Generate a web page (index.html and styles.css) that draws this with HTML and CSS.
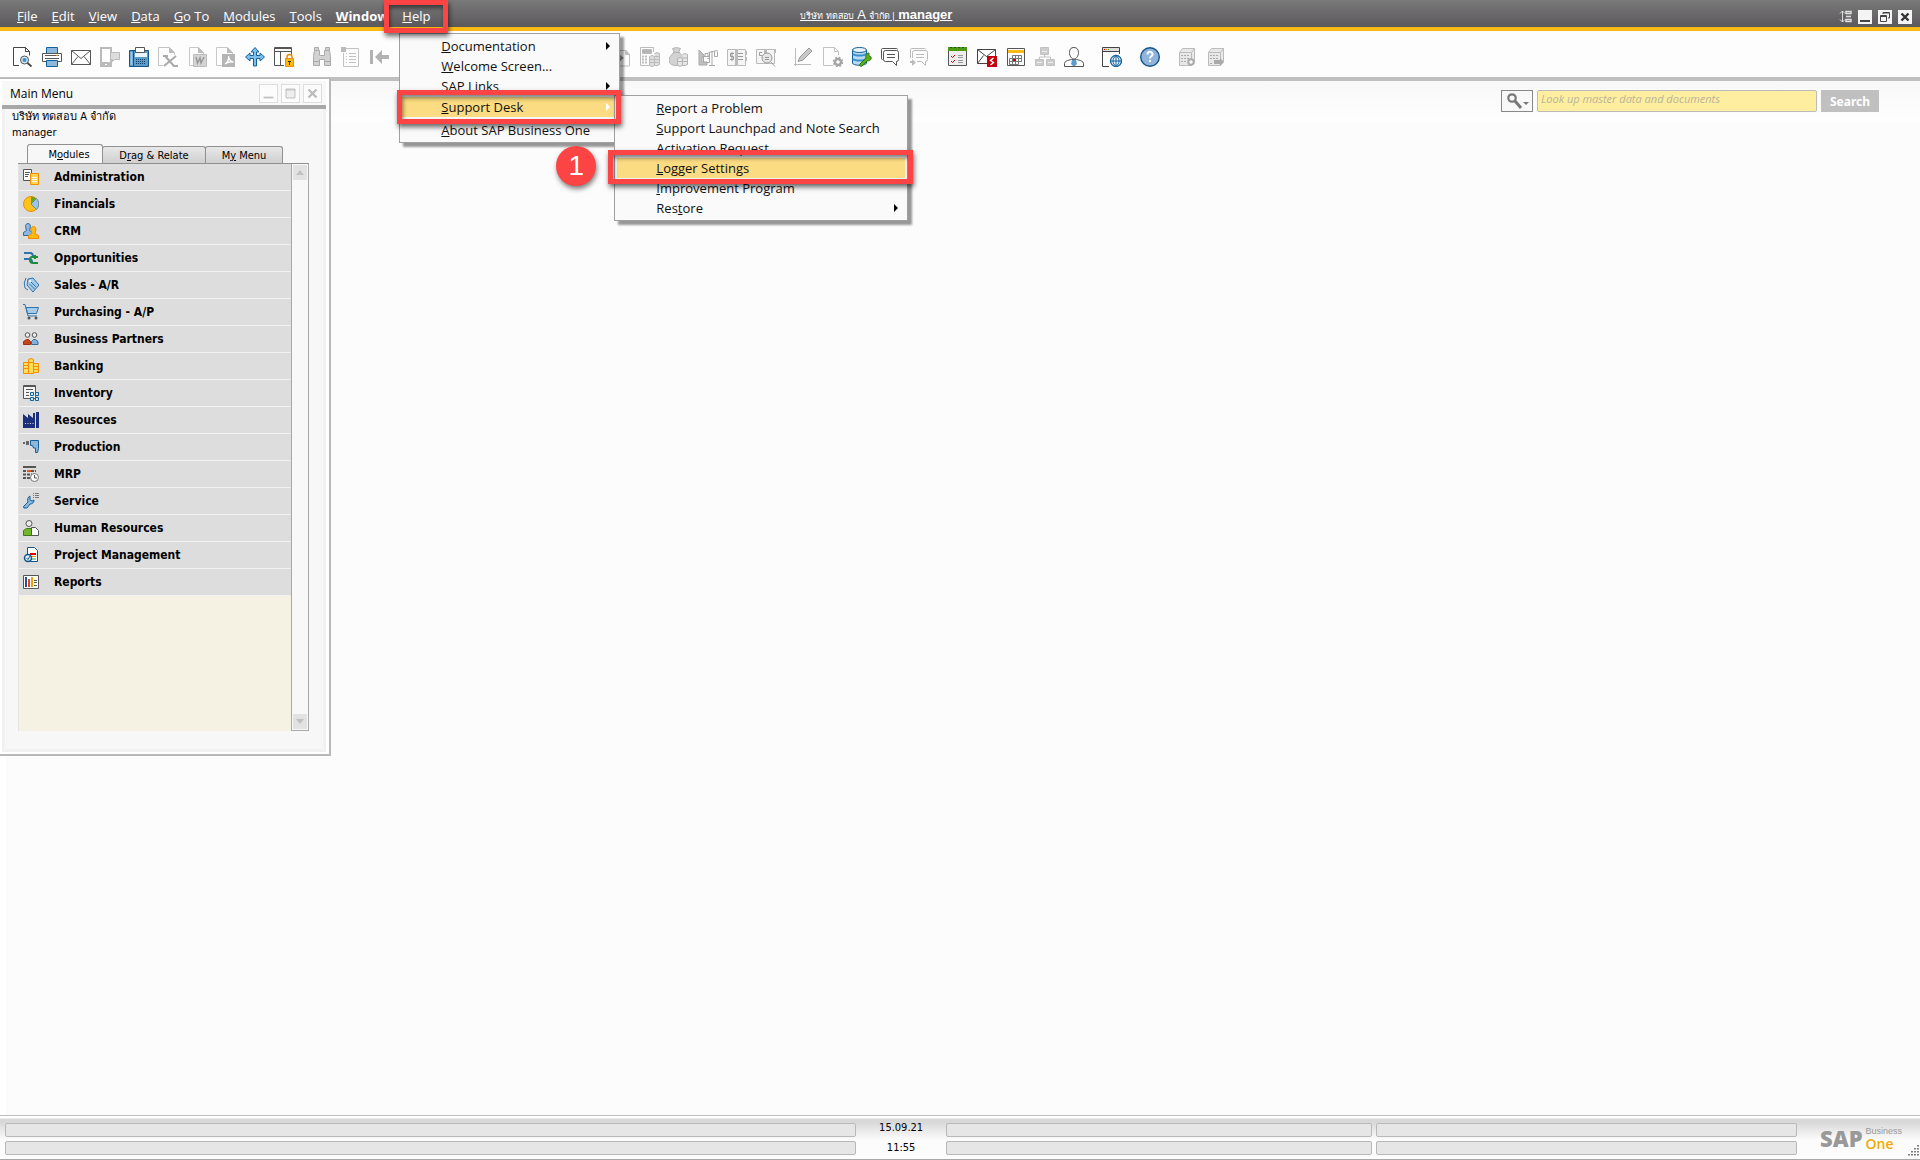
FILE: index.html
```html
<!DOCTYPE html>
<html lang="en">
<head>
    <meta charset="UTF-8">
    <meta name="viewport" content="width=device-width, initial-scale=1.0">
    <title>SAP Business One</title>
    <link rel="stylesheet" href="styles.css">
</head>
<body>
    <header class="menubar">
        <nav aria-label="Main">
            <ul class="menus">
                <li><button class="menu-btn"><u>F</u>ile</button></li>
                <li><button class="menu-btn"><u>E</u>dit</button></li>
                <li><button class="menu-btn"><u>V</u>iew</button></li>
                <li><button class="menu-btn"><u>D</u>ata</button></li>
                <li><button class="menu-btn"><u>G</u>o To</button></li>
                <li><button class="menu-btn"><u>M</u>odules</button></li>
                <li><button class="menu-btn"><u>T</u>ools</button></li>
                <li><button class="menu-btn current"><u>W</u>indow</button></li>
                <li class="open">
                    <button class="menu-btn"><u>H</u>elp</button>
                    <span class="mark mark-help"></span>
                    <ul class="dropdown">
                        <li><button class="item"><u>D</u>ocumentation<i class="arrow"></i></button></li>
                        <li><button class="item"><u>W</u>elcome Screen...</button></li>
                        <li><button class="item"><u>S</u>AP Links<i class="arrow"></i></button></li>
                        <li class="desk">
                            <button class="item active"><u>S</u>upport Desk<i class="arrow"></i></button>
                            <span class="mark mark-desk"></span>
                            <ul class="dropdown sub">
                                <li><button class="item"><u>R</u>eport a Problem</button></li>
                                <li><button class="item"><u>S</u>upport Launchpad and Note Search</button></li>
                                <li><button class="item"><u>A</u>ctivation Request</button></li>
                                <li class="logger">
                                    <button class="item active"><u>L</u>ogger Settings</button>
                                    <span class="mark mark-logger"></span>
                                    <span class="step">1</span>
                                </li>
                                <li><button class="item"><u>I</u>mprovement Program</button></li>
                                <li><button class="item">Res<u>t</u>ore<i class="arrow"></i></button></li>
                            </ul>
                        </li>
                        <li><button class="item"><u>A</u>bout SAP Business One</button></li>
                    </ul>
                </li>
            </ul>
        </nav>
        <a href="#" class="session"><small>บริษัท ทดสอบ</small> <span>A</span> <small>จำกัด |</small> <b>manager</b></a>
        <div class="win-controls">
            <svg width="13" height="13" viewBox="0 0 13 13" fill="none" stroke="#ddd"><path d="M3.500 1v11M1 3.500 3.500 1 6 3.500M1 9.500 3.500 12 6 9.500"/><path d="M7 1.500h5v2H7zM7 6.500h5M7 9.500h5v2H7z" stroke-width="1.500"/></svg>
            <button aria-label="Minimize"><svg width="14" height="14" viewBox="0 0 14 14"><path d="M2 10h10v2H2z" fill="#444"/></svg></button>
            <button aria-label="Restore"><svg width="14" height="14" viewBox="0 0 14 14" fill="none" stroke="#444"><path d="M5 4V2.500h6.500V8H10M2.500 5.500h6v6h-6zM2.500 6.500h6M5 3h6"/></svg></button>
            <button aria-label="Close"><svg width="14" height="14" viewBox="0 0 14 14"><path d="m3.500 3.500 7 7m0-7-7 7" stroke="#333" stroke-width="2.400"/></svg></button>
        </div>
    </header>

    <div class="toolbar" role="toolbar" aria-label="Toolbar">
        <div class="group">
            <button aria-label="Preview"><svg viewBox="0 0 20 20" fill="none"><path d="M6 18.500H.5V.5h12l4 4v4M12.500.5v4h4" stroke="#444"/><circle cx="11.500" cy="13" r="4" fill="#cfe6f7" stroke="#555"/><circle cx="11.500" cy="13" r="2" fill="#3f8fc8"/><path d="m14.500 16 4 3.500" stroke="#444" stroke-width="1.800"/></svg></button>
            <button aria-label="Print"><svg viewBox="0 0 20 20"><path d="M4.500.5h11v6h-11z" fill="#8db8dc" stroke="#14619a"/><path d="M.5 6.500h19v8H.5z" fill="#fff" stroke="#555"/><path d="M3 8.500h14M3 11.500h14" stroke="#555"/><path d="M14 8h2v1h-2z" fill="#e80"/><path d="M4.500 13.500h11v6h-11z" fill="#8db8dc" stroke="#14619a"/></svg></button>
            <button aria-label="Mail"><svg viewBox="0 0 20 20" fill="#fff" stroke="#555"><path d="M.5 3.500h19v14H.5z"/><path d="m.5 3.500 9.500 8 9.500-8M.5 17.500 7 9.500M19.500 17.500 13 9.500" fill="none"/></svg></button>
            <button aria-label="SMS"><svg viewBox="0 0 20 20"><path d="M1 1h10v18H1z" fill="#fff" stroke="#bbb" stroke-width="2"/><path d="M0 15h12v5H0z" fill="#bbb"/><path d="M5 17h2v1H5z" fill="#fff"/><path d="M10.500 5.500h9v7h-5l-2 2v-2h-2z" fill="#ddd" stroke="#bbb"/></svg></button>
            <button aria-label="Fax"><svg viewBox="0 0 20 20"><path d="M.5 3.500h19v16H.5z" fill="#5b9ccb" stroke="#14548a"/><path d="M6.500.5h9v5h-9z" fill="#fff" stroke="#555"/><path d="M1.500 5h2v13h-2z" fill="#9dc6e4"/><path d="M6 6h12v4H6z" fill="#e8f4fc"/><path d="M4.500 4v15" stroke="#14548a"/><path d="M7 12.500h10M7 14.500h10M7 16.500h10" stroke="#143e66" stroke-dasharray="1 1"/></svg></button>
            <button aria-label="Export to Excel"><svg viewBox="0 0 20 20"><path d="M5 18.500H.5V.5h11l5 5V8" fill="none" stroke="#c2c2c2"/><path d="M11 0v6h6z" fill="#bbb"/><path d="m7 9 9 10m2-10L6 19M5 9h5M15 19h5" fill="none" stroke="#aaa" stroke-width="2"/></svg></button>
            <button aria-label="Export to Word"><svg viewBox="0 0 20 20"><path d="M2.500 18.500V.5h9l5 5V8M2.500 18.500H6" fill="none" stroke="#c8c8c8"/><path d="M11 0v6h6z" fill="#bbb"/><path d="M6.500 7.500h13v12h-13z" fill="#d4d4d4" stroke="#bbb"/><path d="m9 10 1.500 6 2.500-5 1 5 3-6" fill="none" stroke="#999" stroke-width="1.500"/></svg></button>
            <button aria-label="Export to PDF"><svg viewBox="0 0 20 20"><path d="M6 18.500H.5V.5h11l5 5V8" fill="none" stroke="#c8c8c8"/><path d="M11 0v6h6z" fill="#bbb"/><path d="M6 7h13v13H6z" fill="#b5b5b5"/><path d="M9 17c3-2 4-5 3.500-8 .5 4 2 6 5 6-3-.5-6 0-8.500 2z" fill="none" stroke="#fff" stroke-width="1.300"/></svg></button>
            <button aria-label="Move"><svg viewBox="0 0 20 20"><path d="m10 .5 4 4.500h-2.500v3.500H15V6l4.500 4-4.500 4v-2.500h-3.500V19h-3v-7.500H5V14L.5 10 5 6v2.500h3.500V5H6z" fill="#7fc0ea" stroke="#14619a"/></svg></button>
            <button aria-label="Lock screen"><svg viewBox="0 0 20 20"><path d="M10 18.500H.5V.5h17V9M0 4.500h18M6.500 4.500v14" fill="none" stroke="#555"/><path d="M.5 1.500h17" stroke="#555"/><path d="M13 12v-2a2.500 2.500 0 0 1 5 0v2" fill="none" stroke="#e8900c" stroke-width="1.500"/><path d="M11.500 11.500h8v8h-8z" fill="#fdb913" stroke="#e8900c"/><path d="M14 14h3v1h-1v3h-1v-3h-1z" fill="#333"/></svg></button>
        </div>
        <div class="group">
            <button aria-label="Find"><svg viewBox="0 0 20 20" fill="#d2d2d2" stroke="#aaa"><path d="M2.500.5h4v3h1v5h5v-5h1v-3h4v3l1 6v9h-6v-6h-5v6h-6v-9l1-6zM1.500 14.500h6M12.500 14.500h6M2.500 3.500h4M13.500 3.500h4"/></svg></button>
            <button aria-label="Form settings"><svg viewBox="0 0 20 20" fill="none" stroke="#c2c2c2"><path d="M4 1.500h13.500v18H2.500V6M5 6.500h1M8 6.500h7M5 9.500h1M8 9.500h7M5 12.500h1M8 12.500h7M5 15.500h1M8 15.500h7"/><path d="M0 0h5v5H0z" fill="#bbb" stroke="none"/></svg></button>
            <button aria-label="First record"><svg viewBox="0 0 20 20" fill="#b2b2b2"><path d="M0 3h3v14H0zM5 10l7-7v5h7v4h-7v5z"/></svg></button>
            <button aria-label="Previous record"><svg viewBox="0 0 20 20" fill="#b2b2b2"><path d="m2 10 7-7v5h8v4H9v5z"/></svg></button>
            <button aria-label="Next record"><svg viewBox="0 0 20 20" fill="#b2b2b2"><path d="m18 10-7-7v5H3v4h8v5z"/></svg></button>
            <button aria-label="Last record"><svg viewBox="0 0 20 20" fill="#b2b2b2"><path d="M17 3h3v14h-3zM15 10 8 3v5H1v4h7v5z"/></svg></button>
        </div>
        <div class="group">
            <button aria-label="Filter"><svg viewBox="0 0 20 20" fill="#bbb"><path d="M1 2h18l-7 8v8l-4-3v-5z"/></svg></button>
            <button aria-label="Sort"><svg viewBox="0 0 20 20" fill="none" stroke="#bbb"><path d="M2 4.500h16M2 9.500h11M2 14.500h6"/></svg></button>
            <button aria-label="Refresh"><svg viewBox="0 0 20 20" fill="none" stroke="#bbb" stroke-width="2"><path d="M16 6a7 7 0 1 0 1 6M17 1v6h-6"/></svg></button>
            <button aria-label="Base document"><svg viewBox="0 0 20 20" fill="none" stroke="#bbb"><path d="M3.500.5h10l4 4v15h-14z"/></svg></button>
            <button aria-label="Target document"><svg viewBox="0 0 20 20" fill="none" stroke="#c2c2c2"><path d="M6 3.500h9l3.500 4v11.500H6"/><path d="M14.500 3v4.500h4z" fill="#bbb"/><path d="M8 7v8l5-4z" fill="#999" stroke="none"/></svg></button>
            <button aria-label="Gross profit"><svg viewBox="0 0 20 20" fill="#fff" stroke="#bbb"><path d="M9 18.500H.5V.5h13V5"/><path d="M2.500 2.500h9v4h-9z" fill="#b4b4b4"/><path d="M2 9.500h6M2 12.500h6M2 15.500h6" stroke-width="2" stroke-dasharray="2 1"/><path d="M9.500 9.500q2.500-2 5 0v9q-2.500 2-5 0zM14.500 6.500q2.500-2 5 0v11q-2.500 2-5 1M9.500 12.500h5M9.500 15.500h5M14.500 9.500h5M14.500 12.500h5M14.500 15.500h5" fill="#ddd"/></svg></button>
            <button aria-label="Payment means"><svg viewBox="0 0 20 20" fill="#d2d2d2" stroke="#b4b4b4"><path d="M3.500 1.500q4-2 8 0l-2 4c4 2 6 6 4 10-1 4-12 4-13 0-1-4 1-8 5-10z"/><path d="M4 5.500h7"/><path d="M8.500 11.500q2.500-2 5 0v7q-2.500 1.500-5 0zM13.500 7.500q2.500-2 5 0v10q-2.500 1.500-5 1M8.500 14.500h5M13.500 11h5M13.500 14.500h5" fill="#e6e6e6"/></svg></button>
            <button aria-label="Volume and weight"><svg viewBox="0 0 20 20" fill="none" stroke="#a8a8a8"><path d="m1 3 5 5v2H4v5h5v3H1z" fill="#c2c2c2"/><path d="M5.500 9.500h6v6h-6zM7 9V6.500h3V9M14 4v14M11 18.500h6M10.500 5.500l9-2M11.500 5.500v6h-2M16.500 4.500v5h3v-5"/></svg></button>
            <button aria-label="Transaction journal"><svg viewBox="0 0 20 20" fill="#f5f5f5" stroke="#bbb"><path d="M.5 2.500h8v16h-8zM10.500 2.500h8v16h-8z"/><path d="M8 2h2v17H8zM18 4h2v4h-2zM18 10h2v4h-2z" fill="#bbb" stroke="none"/><path d="M11 6.500h5M11 9.500h5M11 12.500h5M7 6.500H3.500v3h3v3H3M5 5v9" fill="none" stroke="#999"/></svg></button>
            <button aria-label="Journal voucher"><svg viewBox="0 0 20 20" fill="#f5f5f5" stroke="#bbb"><path d="M.5 2.500h18v14H.5z"/><path d="M8 2h3v5H8zM18 2h2v4h-2z" fill="#bbb" stroke="none"/><circle cx="11" cy="11" r="5" fill="#e6e6e6" stroke="#999"/><path d="M9 10.500h4M9 12.500h4M6 5.500H3.500v3H6M15 15l4 4.500" fill="none" stroke="#999"/></svg></button>
        </div>
        <div class="group">
            <button aria-label="Layout designer"><svg viewBox="0 0 20 20" fill="none" stroke="#bbb"><path d="M1.500 1v18M0 17.500h17"/><path d="M4 14.500 6 10l9-9 3 3-9 9z" fill="#c8c8c8" stroke="#999"/></svg></button>
            <button aria-label="Document settings"><svg viewBox="0 0 20 20" fill="none" stroke="#c2c2c2"><path d="M10 18.500H.5V.5h11l4 4V8M11.500.5v4h4"/><circle cx="15" cy="15" r="3" stroke="#a5a5a5" stroke-width="2.500"/><circle cx="15" cy="15" r="4.700" stroke="#a5a5a5" stroke-width="1.200" stroke-dasharray="2 1.700"/></svg></button>
            <button aria-label="Query manager"><svg viewBox="0 0 20 20"><path d="M.5 3v13c0 3 14 3 14 0V3" fill="#b9dcf2" stroke="#14619a"/><ellipse cx="7.500" cy="3" rx="7" ry="2.500" fill="#e6f4fc" stroke="#14619a"/><path d="M1 7c2 2 11 2 13 0M1 12c2 2 11 2 13 0" fill="none" stroke="#3f8fc8" stroke-width="2"/><path d="m8 17 6-6c-1-3 1-5 3-5v3l2 1c1 3-2 4-4 4l-5 5c-2 1-3-1-2-2z" fill="#5cb01c" stroke="#2f7a10"/></svg></button>
            <button aria-label="Messages"><svg viewBox="0 0 20 20" fill="#fff" stroke="#555"><path d="M2.500 12.500h-1q-1 0-1-1v-9q0-1 1-1h14q1 0 1 1"/><path d="M4.500 3.500h11q2 0 2 2v7q0 2-2 2v4l-4-4h-7q-2 0-2-2v-7q0-2 2-2zM6 7.500h8M6 10.500h8"/></svg></button>
            <button aria-label="Send message"><svg viewBox="0 0 20 20" fill="none" stroke="#bbb"><path d="M.5 11v-8.500q0-1 1-1h13q1 0 1 1"/><path d="M2.500 11V5.500q0-2 2-2h11q2 0 2 2v7q0 2-2 2v4l-4-4H7M6 7.500h8M6 10.500h8"/><path d="M0 14h2v-2l4 3.500-4 3.500v-3H0z" fill="#bbb" stroke="none"/></svg></button>
        </div>
        <div class="group">
            <button aria-label="Activities"><svg viewBox="0 0 20 20"><path d="M.5.500h18v18H.5z" fill="#eee" stroke="#555"/><path d="M0 0h19v4H0z" fill="#4c9a12"/><path d="M2 .5h16" stroke="#1d5a08" stroke-dasharray="2 2"/><path d="m3 9 1.500 1.500L7 8M3 14l1.500 1.500L7 13" fill="none" stroke="#c00"/><path d="M10 8.500h5M10 10.500h5M10 13.500h5M10 15.500h5" stroke="#999"/></svg></button>
            <button aria-label="Alerts"><svg viewBox="0 0 20 20"><path d="M.5 2.500h18v14H.5z" fill="#fff" stroke="#444"/><path d="m.5 2.500 9 7 9-7M.5 16.500l6-8" fill="none" stroke="#444"/><path d="M10 9h10v11H10z" fill="#c4000c"/><path d="m16.500 11-3 2.500 3 2-3 2.500" fill="none" stroke="#fff" stroke-width="1.400"/></svg></button>
            <button aria-label="Calendar"><svg viewBox="0 0 20 20"><path d="M1.500 1.500h17v17h-17z" fill="#fff" stroke="#555"/><path d="M2 3h16v3H2z" fill="#fdb913"/><path d="M6.500 8.500h9v6h-3v3h-9v-6h3zM3.500 14.500h12M6.500 11.500h9M12.500 8.500v8M6.500 11.500v6M9.500 8.500v9" fill="none" stroke="#777"/><path d="M7 12h3v2H7z" fill="#c00"/></svg></button>
            <button aria-label="Workflow"><svg viewBox="0 0 20 20" fill="#ccc" stroke="#c2c2c2"><path d="M5.500.5h8v7h-8zM.5 12.500h8v6h-8zM11.500 12.500h8v6h-8z"/><path d="M9.500 7v3M4.500 12v-2h11v2" fill="none"/><path d="M7 4.500h5M2 15.500h5M13 15.500h5" stroke="#eee"/></svg></button>
            <button aria-label="User"><svg viewBox="0 0 20 20"><path d="M.5 19.500v-3q0-2 3-3l4-1h5l4 1q3 1 3 3v3z" fill="#fff" stroke="#555"/><path d="m8 13 2-1 2 1 1 4-2 2H9l-2-2z" fill="#5b9ccb"/><path d="M10 .5c3 0 4.500 2 4.500 5s-2 6.500-4.500 6.500-4.500-3-4.500-6.500S7 .5 10 .5z" fill="#fff" stroke="#555"/></svg></button>
        </div>
        <div class="group">
            <button aria-label="Web browser"><svg viewBox="0 0 20 20"><path d="M7 19.500H.5V.5h17V7" fill="#fff" stroke="#444"/><path d="M1 1h16v3H1z" fill="#ddd"/><path d="M0 4.500h18" stroke="#444"/><path d="M2 2h1v1H2z" fill="#c00"/><path d="M4 2h1v1H4z" fill="#e80"/><path d="M6 2h1v1H6z" fill="#3a3"/><circle cx="14" cy="14" r="5.500" fill="#e8f4fc" stroke="#14619a" stroke-width="1.300"/><path d="M14 8.500v11M8.500 14h11M14 8.500c-4 3-4 8 0 11 4-3 4-8 0-11" fill="none" stroke="#14619a"/></svg></button>
        </div>
        <div class="group">
            <button aria-label="Help"><svg viewBox="0 0 20 20"><circle cx="10" cy="10" r="9.300" fill="#8fb3da" stroke="#14548a" stroke-width="1.400"/><path d="M7.500 7.500c0-4 5.500-3 5 0-.3 1.800-2.500 2-2.500 4" fill="none" stroke="#fff" stroke-width="2"/><path d="M9 13h2v2H9z" fill="#fff"/></svg></button>
        </div>
        <div class="group">
            <button aria-label="Server settings"><svg viewBox="0 0 20 20" fill="#e8e8e8" stroke="#bbb"><path d="M1.500 5.500 4.500 1.500h12v13l-3 4h-12zM13.500 5.500l3-4M1.500 5.500h12v13"/><path d="M3 8.500h9M3 11.500h9M3 14.500h6" stroke="#aaa" stroke-dasharray="2 1"/><circle cx="13" cy="15" r="2.700" stroke="#aaa" stroke-width="2" fill="#fff"/></svg></button>
            <button aria-label="Server transfer"><svg viewBox="0 0 20 20" fill="#e8e8e8" stroke="#bbb"><path d="M1.500 5.500 4.500 1.500h12v13l-3 4h-12zM13.500 5.500l3-4M1.500 5.500h12v13"/><path d="M3 8.500h9M3 11.500h9M3 16.500h3" stroke="#aaa" stroke-dasharray="2 1"/><path d="M7 13h6v-2l4 4-4 4v-2H7z" fill="#aaa" stroke="none"/></svg></button>
        </div>
    </div>

    <main class="workspace">
        <section class="window" aria-label="Main Menu">
            <div class="titlebar">
                <h1>Main Menu</h1>
                <button aria-label="Minimize window"><svg viewBox="0 0 19 19"><path d="M4 13h11v2H4z" fill="#c0c0c0"/></svg></button>
                <button aria-label="Maximize window"><svg viewBox="0 0 19 19"><path d="M4.500 4.500h10v10h-10zM4 5.500h11" fill="#eee" stroke="#bbb"/></svg></button>
                <button aria-label="Close window"><svg viewBox="0 0 19 19"><path d="m5 5 9 9m0-9-9 9" stroke="#bbb" stroke-width="2.600"/></svg></button>
            </div>
            <div class="window-body">
                <p class="company">บริษัท ทดสอบ A จำกัด</p>
                <p class="user">manager</p>
                <div class="tabs" role="tablist">
                    <button class="tab active" role="tab">M<u>o</u>dules</button>
                    <button class="tab" role="tab">D<u>r</u>ag &amp; Relate</button>
                    <button class="tab" role="tab">M<u>y</u> Menu</button>
                </div>
                <div class="panel">
                    <ul class="modules">
                        <li><a href="#"><svg viewBox="0 0 16 16"><path d="M.5.5h8v11h-8z" fill="#fff" stroke="#555"/><path d="M2 3.500h5M2 5.500h4M2 7.500h3" stroke="#555"/><path d="M7.500 4.500h8v11h-8z" fill="#ffd34d" stroke="#f09000"/><path d="M9 8.500h5M9 10.500h5M9 12.500h5" stroke="#fff"/></svg>Administration</a></li>
                        <li><a href="#"><svg viewBox="0 0 16 16"><circle cx="8" cy="8" r="7.500" fill="#fdc21c" stroke="#f09000"/><path d="M8 8V.5A7.500 7.500 0 0 1 13 2.500z" fill="#62a820"/><path d="m8 8 5.500-5.500c3 3 3 8 0 11z" fill="#9cc4e6" stroke="#2c6ca0" stroke-width=".6"/></svg>Financials</a></li>
                        <li><a href="#"><svg viewBox="0 0 16 16"><path d="M.5 12.500v-3l3-2-1-4c0-4 5-4 5 0l-1 4 3 2v3z" fill="#8db8dc" stroke="#2c6ca0"/><path d="M5.500 15.500v-3l3.500-2-1-4c0-4 5-4 5 0l-1 4 3.500 2v3z" fill="#fdb913" stroke="#f08c00"/></svg>CRM</a></li>
                        <li><a href="#"><svg viewBox="0 0 16 16" fill="none" stroke-width="2"><path d="M1 3h7q2 1 2 3M1 9h5q3 0 3 3" stroke="#2e74ae"/><path d="M15 7H9q-2 0-2 3t3 3h5M12 5v4" stroke="#1e8c3c"/></svg>Opportunities</a></li>
                        <li><a href="#"><svg viewBox="0 0 16 16"><path d="m5 2 5-1 6 7-6 7-6-7z" fill="#a5cbe8" stroke="#2e74ae"/><path d="M3 1q-3 5-1 10l3 2M8 5l5 5M6.500 7l5 5" fill="none" stroke="#2e74ae"/><circle cx="7" cy="4" r="1" fill="#fff"/></svg>Sales - A/R</a></li>
                        <li><a href="#"><svg viewBox="0 0 16 16"><path d="M3 3.500h12.500l-2 6h-9z" fill="#a5cbe8" stroke="#2e74ae"/><path d="M0 .5h2l3 11.500h9" fill="none" stroke="#2e74ae"/><circle cx="6" cy="14" r="1.500" fill="#555"/><circle cx="13" cy="14" r="1.500" fill="#555"/></svg>Purchasing - A/P</a></li>
                        <li><a href="#"><svg viewBox="0 0 16 16" stroke="#555"><circle cx="4.500" cy="4" r="2.300" fill="#eee"/><circle cx="11.500" cy="4" r="2.300" fill="#eee"/><path d="M.5 13.500v-3l3-2h2l2 2v3z" fill="#c8441c" stroke="#a03010"/><path d="M8.500 13.500v-3l2-2h2l2.500 2v3z" fill="#7fb2de" stroke="#2c6ca0"/></svg>Business Partners</a></li>
                        <li><a href="#"><svg viewBox="0 0 16 16" fill="#ffdc5c" stroke="#f09000"><path d="M.5 4.500h5v11h-5zM5.500 1.500q2.500-2 5 0v14h-5zM10.500 5.500h5v9h-5zM.5 7.500h5M.5 10.500h5M5.500 4.500h5M10.500 8.500h5M10.500 11.500h5"/></svg>Banking</a></li>
                        <li><a href="#"><svg viewBox="0 0 16 16"><path d="M.5.500h12v13H.5z" fill="#f4f4f4" stroke="#555"/><path d="M0 1.500h13M3 4.500h7M3 7.500h3M3 10.500h3" stroke="#555"/><path d="M7.500 7.500h3v3h-3zM12.500 7.500h3v3h-3zM7.500 12.500h3v3h-3zM12.500 12.500h3v3h-3z" fill="#cfe6f7" stroke="#14619a"/></svg>Inventory</a></li>
                        <li><a href="#"><svg viewBox="0 0 16 16"><path d="M0 16V2l5 4V2l5 4V1h2v15zM13 0h3v16h-3z" fill="#1c2f7c"/><path d="M2 11.500h9" stroke="#dde" stroke-dasharray="1 1.500"/></svg>Resources</a></li>
                        <li><a href="#"><svg viewBox="0 0 16 16"><path d="M0 3h2v2H0zM3 2h3v4H3z" fill="#666"/><path d="M7.500 1.500h8v8l-1 4h-2V9h-2l-1-2.500h-2z" fill="#8db8dc" stroke="#14619a"/></svg>Production</a></li>
                        <li><a href="#"><svg viewBox="0 0 16 16"><path d="M0 0h13v2H0z" fill="#555"/><path d="M0 5h13M0 8.500h9M0 12h8" stroke="#555" stroke-width="2" stroke-dasharray="3 1"/><path d="M4 4h4v2H4z" fill="#e0560c"/><circle cx="11.500" cy="11.500" r="4" fill="#fff" stroke="#777"/><path d="M11.500 9v3H14" fill="none" stroke="#555"/></svg>MRP</a></li>
                        <li><a href="#"><svg viewBox="0 0 16 16"><path d="M1 15q-1-1 0-2l4-4c-1-3 0-5 2-6v4l2 1 2-1c0 3-2 4-4 4l-3 4z" fill="#8db8dc" stroke="#14619a"/><path d="M10 .5h1M12 .5h4M10 2.500h1M12 2.500h4M10 4.500h1M12 4.500h4" stroke="#777"/></svg>Service</a></li>
                        <li><a href="#"><svg viewBox="0 0 16 16"><circle cx="6" cy="3.500" r="3" fill="#eee" stroke="#555"/><path d="M.5 15.500v-5l3-2H9v7z" fill="#72b62c" stroke="#3d7a14"/><path d="M8.500 7.500h4l3 3v5h-7z" fill="#fff" stroke="#555"/></svg>Human Resources</a></li>
                        <li><a href="#"><svg viewBox="0 0 16 16"><path d="M4.500.5h7l3 3v11h-10z" fill="#fff" stroke="#14548a"/><path d="M7 6h6v2H7z" fill="#d00"/><path d="M7 9.500h6" stroke="#e80"/><path d="M8 12h5" stroke="#2a9a50"/><circle cx="5" cy="11" r="3.500" fill="#dcecf8" stroke="#14548a" stroke-width="1.500"/><path d="m3.500 11 1.500 1.500L7 9" fill="none" stroke="#14548a"/></svg>Project Management</a></li>
                        <li><a href="#"><svg viewBox="0 0 16 16"><path d="M.5 1.500h15v13H.5z" fill="#fff" stroke="#555"/><path d="M2 3h2v10H2z" fill="#2a4e9c"/><path d="M5 5h2v8H5z" fill="#d84c10"/><path d="M8 3h2v10H8z" fill="#f4a000"/><path d="M11 6.500h3M11 8.500h3M11 11.500h3" stroke="#555"/></svg>Reports</a></li>
                    </ul>
                    <div class="scrollbar">
                        <button aria-label="Scroll up"><i class="up"></i></button>
                        <button aria-label="Scroll down"><i class="down"></i></button>
                    </div>
                </div>
            </div>
        </section>

        <form class="search">
            <button type="button" class="search-type" aria-label="Search type"><svg width="22" height="17" viewBox="0 0 22 17" fill="none" stroke="#777"><circle cx="5" cy="5" r="3.700" stroke-width="2.200"/><path d="m8 8 6 7" stroke-width="3"/><path d="M16 9h6l-3 3z" fill="#777" stroke="none"/></svg></button>
            <input type="text" aria-label="Search" placeholder="Look up master data and documents">
            <button type="submit" class="search-btn">Search</button>
        </form>
    </main>

    <footer class="statusbar">
        <div class="fields"><span></span><span></span></div>
        <div class="clock"><time>15.09.21</time><time>11:55</time></div>
        <div class="fields"><span></span><span></span></div>
        <div class="fields"><span></span><span></span></div>
        <div class="brand">
            <b>SAP</b>
            <p><span>Business</span><strong>One</strong></p>
            <svg class="grip" width="14" height="14" viewBox="0 0 14 14" stroke="#555" stroke-width="1.500" stroke-dasharray="1.500 1.500"><path d="M12 1v12M9 4v9M6 7v6M3 10v3"/></svg>
        </div>
    </footer>
</body>
</html>
```
FILE: styles.css
```css
* {
    margin: 0;
    padding: 0;
    box-sizing: border-box;
}

body {
    display: flex;
    flex-direction: column;
    min-height: 100vh;
    font-family: "Open Sans", "Noto Sans", sans-serif;
    font-size: 13px;
    background: #fcfcfc;
    color: #000;
}

ul {
    list-style: none;
}

button {
    font: inherit;
    color: inherit;
    border: none;
    background: none;
}

svg {
    display: block;
}

/* menu bar */
.menubar {
    display: grid;
    grid-template-columns: 5fr 6fr 1fr;
    align-items: center;
    height: 31px;
    border-bottom: 4px solid #fdb913;
    background: linear-gradient(#7a7a7a, #5b585b);
    color: #fff;
}

.menus {
    display: flex;
    gap: 14px;
    padding-left: 17px;
}

.menus > li {
    position: relative;
}

.menu-btn {
    display: block;
    line-height: 27px;
    padding-top: 3px;
    white-space: nowrap;
}

.menu-btn.current {
    font-weight: 700;
}

.session {
    justify-self: start;
    color: #fff;
    font-family: "Liberation Sans", sans-serif;
    font-size: 13px;
    line-height: 20px;
    white-space: nowrap;
}

.session small {
    font-size: 9px;
}

.win-controls {
    display: flex;
    justify-content: flex-end;
    align-items: center;
    gap: 6px;
    padding: 3px 8px 0 0;
}

.win-controls button {
    background: #f4f4f4;
}

/* drop-down menus */
.dropdown {
    position: absolute;
    z-index: 10;
    top: 33px;
    left: -3px;
    width: 221px;
    padding: 2px;
    border: 1px solid #a0a0a0;
    background: #fafafa;
    box-shadow: 4px 4px 2px rgba(0, 0, 0, 0.4);
    color: #111;
}

.dropdown.sub {
    top: -2px;
    left: 212px;
    width: 294px;
}

.item {
    display: flex;
    align-items: center;
    width: 100%;
    height: 20px;
    padding: 0 7px 0 39px;
    text-align: left;
    white-space: nowrap;
}

.item.active {
    background: #fcdc82;
}

.arrow {
    margin-left: auto;
    border: 4px solid transparent;
    border-left-color: #000;
    border-right: none;
}

.desk {
    position: relative;
    margin: 1px 0 3px;
}

.desk > .active .arrow {
    border-left-color: #fff;
}

.logger {
    position: relative;
}

.mark {
    position: absolute;
    z-index: 20;
    border: 5px solid #fc4444;
    box-shadow: 1px 3px 5px rgba(0, 0, 0, 0.6), inset 1px 3px 4px rgba(0, 0, 0, 0.5);
    pointer-events: none;
}

.mark-help {
    inset: 0 -18px -3px;
}

.mark-desk {
    inset: -7px -4px -7px -5px;
}

.mark-logger {
    inset: -8px -8px -6px -9px;
}

.step {
    position: absolute;
    top: -12px;
    left: -61px;
    width: 40px;
    height: 40px;
    border-radius: 50%;
    background: #fc4444;
    box-shadow: 1px 3px 5px rgba(0, 0, 0, 0.5);
    color: #fff;
    font-family: "Liberation Sans", sans-serif;
    font-size: 28px;
    line-height: 40px;
    text-align: center;
}

/* toolbar */
.toolbar {
    display: flex;
    gap: 18px;
    height: 50px;
    padding: 16px 13px 0;
    border-bottom: 4px solid #bfbfbf;
    background: #fdfdfd;
}

.group {
    display: flex;
    gap: 9px;
}

.group button,
.group svg {
    width: 20px;
    height: 20px;
}

/* workspace */
.workspace {
    position: relative;
    flex: 1;
    border-left: 6px solid #fff;
    background: linear-gradient(#f8f8f8, #fefefe 40px, #fcfcfc 41px);
}

.search {
    display: flex;
    justify-content: flex-end;
    gap: 4px;
    padding: 9px 41px 9px 0;
}

.search > * {
    height: 22px;
}

.search-type {
    width: 32px;
    padding-left: 5px;
    border: 1px solid #888;
    background: #f8f8f8;
}

.search input {
    width: 280px;
    padding: 0 3px 5px;
    border: 1px solid #bbb;
    border-radius: 2px;
    background: #feee9f;
    font: italic 11px "Open Sans", sans-serif;
}

.search input::placeholder {
    color: #b9b49a;
    opacity: 1;
}

.search-btn {
    width: 58px;
    background: #c0c0c0;
    color: #fff;
    font: bold 12px "Noto Sans", sans-serif;
}

/* main menu window */
.window {
    position: absolute;
    top: -3px;
    left: -6px;
    width: 331px;
    padding: 2px 3px 2px 2px;
    border: solid #b8b8b8;
    border-width: 1px 2px 2px 0;
    background: #fff;
    font-family: "DejaVu Sans Condensed", "DejaVu Sans", sans-serif;
    font-size: 11px;
}

.titlebar {
    display: flex;
    align-items: center;
    gap: 3px;
    height: 28px;
    padding: 2px 4px 2px 8px;
    border-bottom: 4px solid #a8a8a8;
    background: #f8f8f8;
}

.titlebar h1 {
    flex: 1;
    font: 12px "Open Sans", sans-serif;
}

.titlebar button {
    width: 19px;
    height: 19px;
    border: 1px solid #ddd;
    background: #fcfcfc;
}

.window-body {
    padding: 0 13px 18px 13px;
    border: 3px solid #f1f1f1;
    border-top: none;
    background: #f7f7f7;
}

.company,
.user {
    margin-left: -6px;
    line-height: 16px;
}

.tabs {
    display: flex;
    align-items: flex-end;
    padding: 3px 0 0 9px;
}

.tab {
    width: 78px;
    height: 17px;
    margin-right: -1px;
    border: 1px solid #909090;
    border-bottom: none;
    border-radius: 3px 3px 0 0;
    background: linear-gradient(#e8e8e8, #d0d0d0);
}

.tab.active {
    width: 76px;
    height: 19px;
    padding-left: 8px;
    background: #f7f7f7;
}

.tab:nth-child(2) {
    width: 104px;
}

.panel {
    display: flex;
    width: 291px;
    height: 568px;
    border-top: 1px solid #909090;
}

.modules {
    flex: 1;
    border-left: 1px solid #e4e4e4;
    background: #f5f2e4;
}

.modules li {
    height: 27px;
    border-bottom: 1px solid #f2f2f2;
    background: #ddd;
}

.modules a {
    display: flex;
    align-items: center;
    gap: 15px;
    height: 26px;
    padding-left: 4px;
    color: #000;
    font: bold 12px "DejaVu Sans Condensed", "DejaVu Sans", sans-serif;
    text-decoration: none;
}

.modules svg {
    width: 16px;
    height: 16px;
}

.scrollbar {
    display: flex;
    flex-direction: column;
    justify-content: space-between;
    width: 18px;
    padding: 1px;
    border: 1px solid #a8a8a8;
    border-top: none;
    background: #f8f8f8;
}

.scrollbar button {
    display: grid;
    place-items: center;
    height: 15px;
    background: #e2e2e2;
}

.up,
.down {
    border: 4px solid transparent;
}

.up {
    border-top: none;
    border-bottom: 5px solid #c0c0c0;
}

.down {
    border-bottom: none;
    border-top: 5px solid #c0c0c0;
}

/* status bar */
.statusbar {
    display: grid;
    grid-template-columns: 200fr 82px 100fr 99fr 119px;
    gap: 4px;
    height: 45px;
    padding: 5px 0 0 5px;
    border-top: 1px solid #bfbfbf;
    border-bottom: 1px solid #a8a8a8;
    background: linear-gradient(#fff 2px, #d8d8d8 3px, #d8d8d8 6px, #fcfcfc 24px);
}

.fields {
    display: flex;
    flex-direction: column;
    gap: 4px;
    padding-top: 2px;
}

.fields span {
    height: 14px;
    border: 1px solid #b8b8b8;
    border-radius: 2px;
    background: #e6e6e6;
}

.clock {
    display: flex;
    flex-direction: column;
    gap: 7px;
    font: 11px/13px "DejaVu Sans Condensed", "DejaVu Sans", sans-serif;
    text-align: center;
}

.brand {
    position: relative;
    display: flex;
    gap: 3px;
    padding-left: 19px;
    color: #999;
}

.brand b {
    font: 800 22px/34px "Open Sans", sans-serif;
}

.brand p {
    padding-top: 4px;
    font: 9px/12px "Liberation Sans", sans-serif;
}

.brand span,
.brand strong {
    display: block;
}

.brand strong {
    color: #f0ab00;
    font: 600 14px/13px "Open Sans", sans-serif;
}

.grip {
    position: absolute;
    right: 0;
    bottom: 1px;
}
```
